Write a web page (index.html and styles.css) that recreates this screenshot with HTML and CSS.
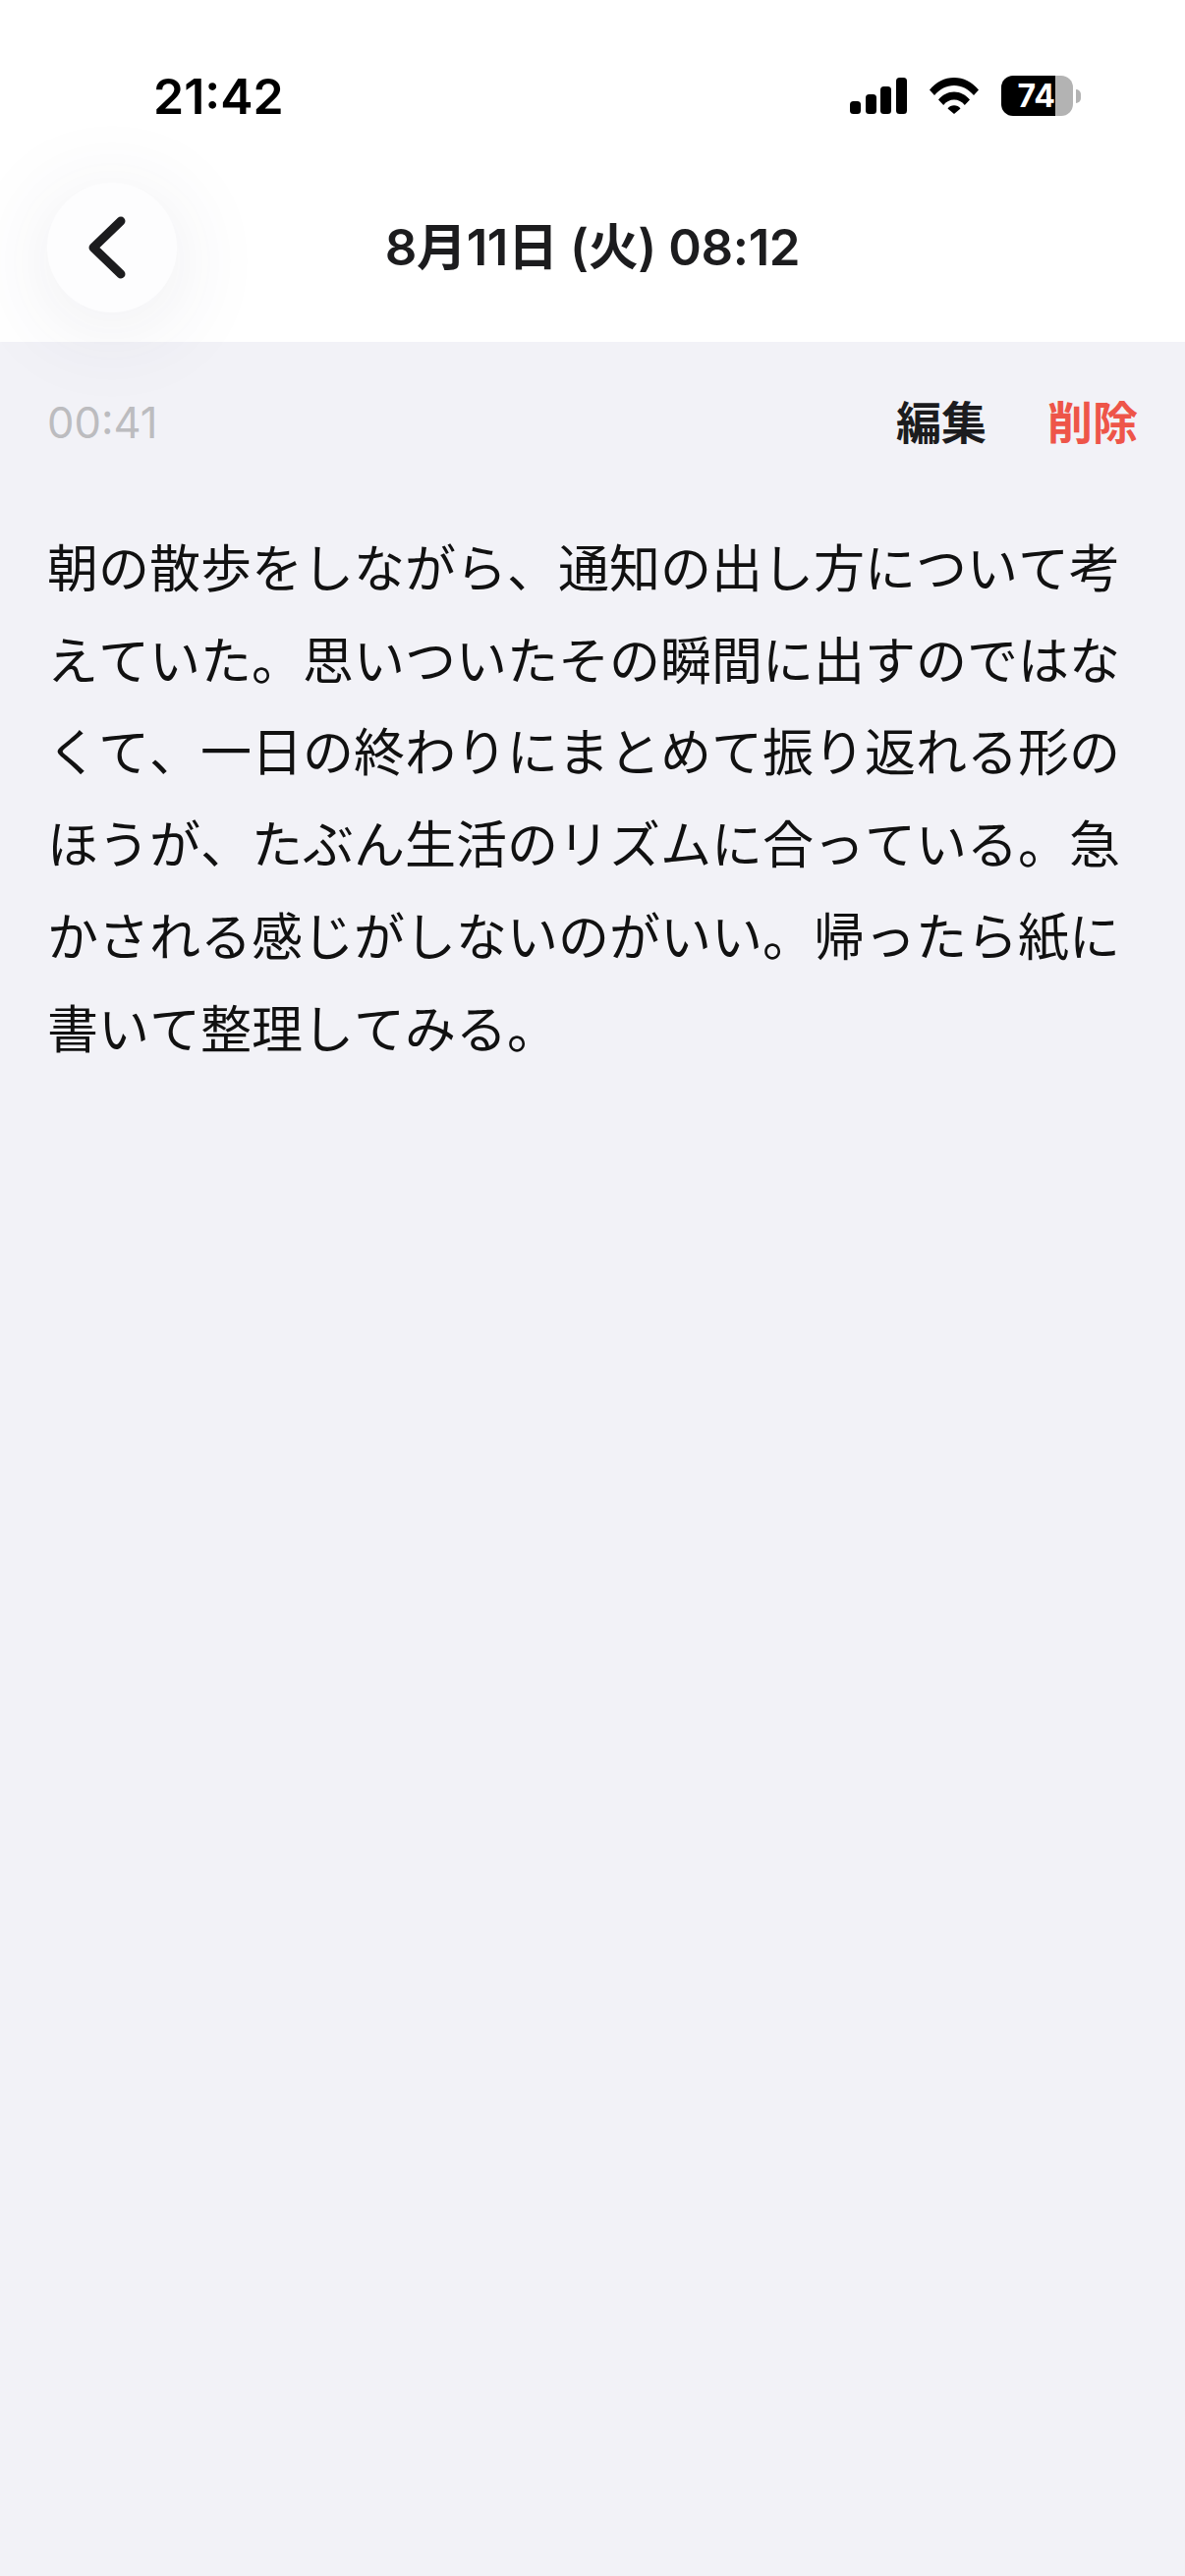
FILE: index.html
```html
<!DOCTYPE html>
<html lang="ja">
<head>
<meta charset="utf-8">
<title>8月11日 (火) 08:12</title>
<link rel="stylesheet" href="styles.css">
</head>
<body>
<header class="top">
  <div class="status">
    <span class="clock">21:42</span>
    <div class="status-icons">
      <svg class="signal" viewBox="0 0 58 37" width="58" height="37"><rect x="0" y="24" width="11" height="13" rx="3.5"/><rect x="16" y="17" width="11" height="20" rx="3.5"/><rect x="31" y="9" width="11" height="28" rx="3.5"/><rect x="47" y="0" width="11" height="37" rx="3.5"/></svg>
      <svg class="wifi" viewBox="0 0 50 37" width="50" height="37"><path d="M0 12.500C6.500 4.500 15.500 0 25 0s18.500 4.500 25 12.500l-5 5.500C39.500 11.500 32.500 8 25 8S10.500 11.500 5 18z"/><path d="M9 22.500C13 17.500 18.800 14.500 25 14.500s12 3 16 8l-5.200 5.500C33 24.600 29.200 22.600 25 22.600s-8 2-10.800 5.400z"/><path d="M18.500 31.500c1.600-2 3.900-3.200 6.500-3.200s4.900 1.200 6.500 3.200L25 37z"/></svg>
      <div class="battery">
        <div class="cell"><span class="level">74</span></div>
        <span class="nub"></span>
      </div>
    </div>
  </div>
  <div class="nav">
    <button class="back" aria-label="戻る">
      <svg viewBox="0 0 44 72" width="44" height="72"><path d="M36 9 L8 36 L36 63"/></svg>
    </button>
    <h1 class="title">8月11日 (火) 08:12</h1>
  </div>
</header>
<main class="content">
  <div class="meta">
    <span class="duration">00:41</span>
    <div class="actions">
      <span class="edit">編集</span>
      <span class="delete">削除</span>
    </div>
  </div>
  <p class="body">朝の散歩をしながら、通知の出し方について考えていた。思いついたその瞬間に出すのではなくて、一日の終わりにまとめて振り返れる形のほうが、たぶん生活のリズムに合っている。急かされる感じがしないのがいい。帰ったら紙に書いて整理してみる。</p>
</main>
</body>
</html>
```
FILE: styles.css
```css
* { box-sizing: border-box; margin: 0; padding: 0; }
html, body { height: 100%; }
body {
  width: 1206px;
  height: 2622px;
  overflow: hidden;
  background: #f2f2f7;
  font-family: Inter, "Noto Sans CJK JP", sans-serif;
  display: flex;
  flex-direction: column;
}
.top { background: #fff; height: 348px; flex: none; position: relative; z-index: 1; }
.status {
  height: 186px;
  padding: 0 106px 0 156px;
  display: flex;
  justify-content: space-between;
  align-items: flex-start;
}
.clock {
  margin-top: 65px;
  font-size: 50px;
  line-height: 66px;
  font-weight: 600;
  color: #000;
}
.status-icons { margin-top: 77px; display: flex; align-items: flex-start; gap: 23px; }
.signal, .wifi { margin-top: 2px; fill: #000; display: block; }
.battery { display: flex; align-items: center; gap: 3px; }
.cell {
  width: 73px;
  height: 41px;
  border-radius: 12px;
  background: linear-gradient(to right, #000 55px, #b3b3b3 55px);
  color: #fff;
  display: flex;
  align-items: center;
  overflow: hidden;
}
.level {
  width: 55px;
  text-align: right;
  font-size: 32px;
  line-height: 41px;
  font-weight: 700;
}
.nub { width: 5px; height: 14px; background: #b3b3b3; border-radius: 0 7px 7px 0; }
.nav {
  height: 132px;
  padding-left: 48px;
  position: relative;
  display: flex;
  align-items: center;
}
.back {
  width: 132px;
  height: 132px;
  border: 0;
  border-radius: 50%;
  background: #fdfdfe;
  box-shadow: 0 14px 96px rgba(60, 60, 100, 0.1);
  display: flex;
  align-items: center;
  justify-content: center;
}
.back svg { display: block; margin-left: -10px; }
.back path { fill: none; stroke: #1c1c1e; stroke-width: 9; stroke-linecap: round; stroke-linejoin: round; }
.title {
  position: absolute;
  left: 0;
  right: 0;
  text-align: center;
  font-size: 51px;
  line-height: 70px;
  font-weight: 600;
  letter-spacing: -0.4px;
  color: #1c1c1e;
}
.content { flex: 1; padding: 48px 48px 0; }
.meta {
  height: 68px;
  display: flex;
  justify-content: space-between;
  align-items: center;
}
.duration { font-size: 43.5px; color: #bcbcbf; }
.actions { display: flex; gap: 62px; font-size: 46px; font-weight: 700; padding-bottom: 6px; }
.edit { color: #1c1c1e; }
.delete { color: #ee5549; }
.body {
  margin-top: 69px;
  font-size: 52px;
  line-height: 93.7px;
  color: #111;
  font-kerning: none;
  font-feature-settings: "kern" 0, "palt" 0;
  text-spacing-trim: space-all;
}
```
